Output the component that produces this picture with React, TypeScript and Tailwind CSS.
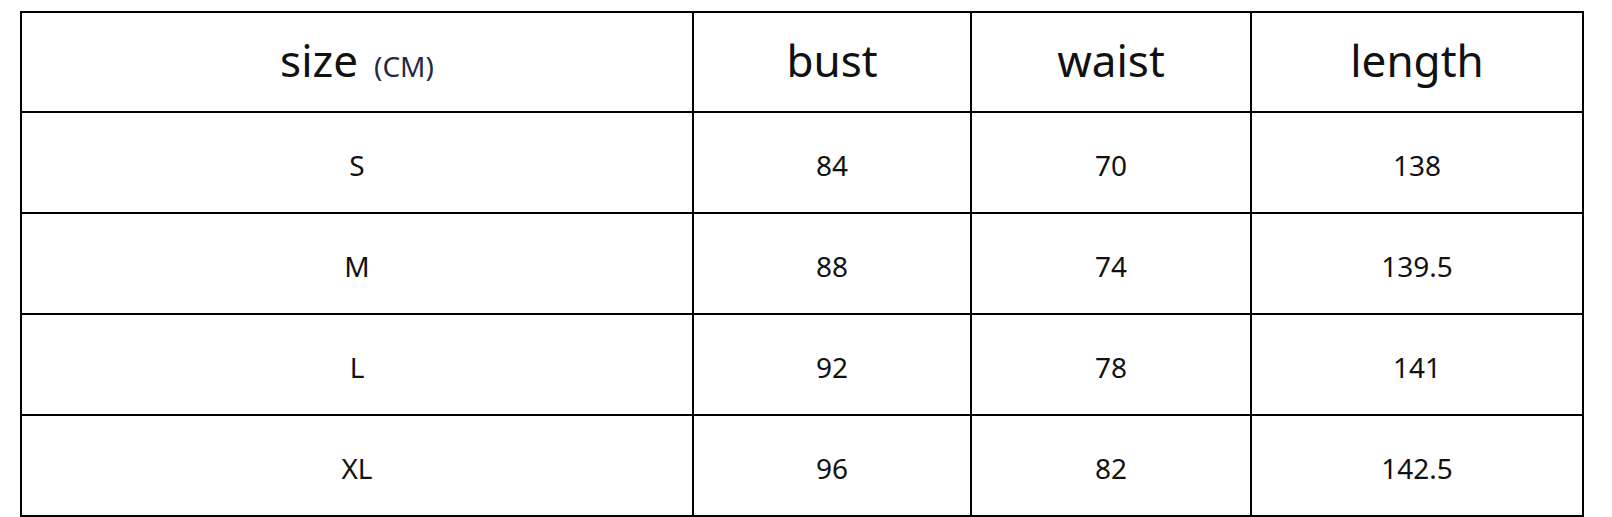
import React from "react";

const rows = [
  ["S", "84", "70", "138"],
  ["M", "88", "74", "139.5"],
  ["L", "92", "78", "141"],
  ["XL", "96", "82", "142.5"],
];

export default function App() {
  return (
    <div className="w-[1612px] h-[517px] bg-white overflow-hidden pt-[11px] pl-[20px]" style={{ fontFamily: '"Noto Sans", "Open Sans", sans-serif' }}>
      <table className="border-collapse border-2 border-black text-[#111] w-[1562px] table-fixed">
        <colgroup>
          <col className="w-[672px]" />
          <col className="w-[278px]" />
          <col className="w-[280px]" />
          <col className="w-[332px]" />
        </colgroup>
        <thead>
          <tr className="h-[100px]">
            <th className="border-2 border-black font-normal text-[44px] text-center align-middle pb-[4px]">
              size<span className="ml-[16px] text-[28px] text-[#1f2a44]">(CM)</span>
            </th>
            <th className="border-2 border-black font-normal text-[44px] text-center align-middle pb-[4px]">bust</th>
            <th className="border-2 border-black font-normal text-[44px] text-center align-middle pb-[4px]">waist</th>
            <th className="border-2 border-black font-normal text-[44px] text-center align-middle pb-[4px]">length</th>
          </tr>
        </thead>
        <tbody>
          {rows.map((r) => (
            <tr key={r[0]} className="h-[101px]">
              {r.map((c, i) => (
                <td key={i} className="border-2 border-black text-[28px] text-center align-middle pt-[5px]">
                  {c}
                </td>
              ))}
            </tr>
          ))}
        </tbody>
      </table>
    </div>
  );
}
